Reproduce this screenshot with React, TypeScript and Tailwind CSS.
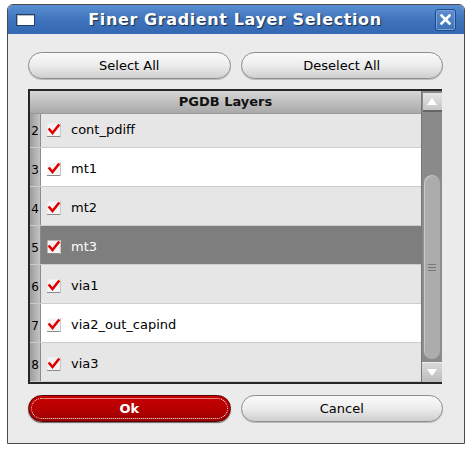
import React from "react";

const rows = [
  { n: 2, name: "cont_pdiff", bg: "bg-[#e6e6e6]" },
  { n: 3, name: "mt1", bg: "bg-white" },
  { n: 4, name: "mt2", bg: "bg-[#e6e6e6]" },
  { n: 5, name: "mt3", bg: "bg-[#7e7e7e]", sel: true },
  { n: 6, name: "via1", bg: "bg-[#e6e6e6]" },
  { n: 7, name: "via2_out_capind", bg: "bg-white" },
  { n: 8, name: "via3", bg: "bg-[#e6e6e6]" },
];

function Check() {
  return (
    <svg width="14" height="14" viewBox="0 0 14 14" className="shrink-0">
      <rect x="0.5" y="0.5" width="13" height="13" fill="#f4f4f4" />
      <line x1="0" y1="13.5" x2="14" y2="13.5" stroke="#8a8a8a" />
      <line x1="13.5" y1="0" x2="13.5" y2="14" stroke="#c8c8c8" />
      <path d="M2.5 6.5 L5.5 10 L11.5 2.5" fill="none" stroke="#e00000" strokeWidth="2.6" strokeLinecap="square" strokeLinejoin="miter" />
    </svg>
  );
}

export default function App() {
  const font = { fontFamily: '"DejaVu Sans", Verdana, sans-serif' };
  return (
    <div className="w-[473px] h-[450px] bg-white relative" style={font}>
      <div className="absolute left-[7px] top-[4px] w-[458px] h-[440px] flex flex-col rounded-t-[6px] border border-[#4a4a4a] overflow-hidden">
        {/* Title bar */}
        <div className="h-[29px] shrink-0 bg-gradient-to-b from-[#5b8fd3] via-[#3f74bd] to-[#3468b2] flex items-center px-[8px] relative">
          <div className="w-[19px] h-[12px] bg-white border border-[#1f3f70] shadow-[inset_1px_1px_0_#bbb]" />
          <div className="flex-1 text-center text-white font-bold text-[16px] tracking-[0.6px] [text-shadow:1px_1px_1px_#1a2d4d]">
            Finer Gradient Layer Selection
          </div>
          <div className="w-[21px] h-[22px] rounded-[3px] border border-[#1f4a85] bg-gradient-to-b from-[#5d8fd0] to-[#3c6fb5] flex items-center justify-center shadow-[inset_0_0_0_1px_#7aa3da]">
            <svg width="11" height="11" viewBox="0 0 11 11">
              <path d="M1.5 1.5 L9.5 9.5 M9.5 1.5 L1.5 9.5" stroke="white" strokeWidth="2.6" strokeLinecap="square" />
            </svg>
          </div>
        </div>
        {/* Body */}
        <div className="flex-1 bg-[#ebebeb] pt-[18px] pl-[20px] pr-[21px] flex flex-col">
          <div className="grid grid-cols-2 gap-[10px]">
            <button className="h-[27px] rounded-full border border-[#8c8c8c] bg-gradient-to-b from-[#fafafa] via-[#ececec] to-[#cfcfcf] text-[13px] text-black shadow-[0_1px_0_#bdbdbd]">
              Select All
            </button>
            <button className="h-[27px] rounded-full border border-[#8c8c8c] bg-gradient-to-b from-[#fafafa] via-[#ececec] to-[#cfcfcf] text-[13px] text-black shadow-[0_1px_0_#bdbdbd]">
              Deselect All
            </button>
          </div>
          {/* List */}
          <div className="mt-[10px] h-[295px] border-t-2 border-l-2 border-b-2 border-[#262626] flex mr-[1px]">
            <div className="flex-1 flex flex-col overflow-hidden">
              <div className="h-[23px] shrink-0 bg-gradient-to-b from-[#d6d6d6] to-[#a9a9a9] border-b border-[#9a9a9a] flex items-center justify-center font-bold text-[13px] text-[#111]">
                PGDB Layers
              </div>
              <div className="flex-1 overflow-hidden">
                <div className="-mt-[5px]">
                  {rows.map((r) => (
                    <div key={r.n} className={`h-[39px] flex ${r.bg} border-b border-[#cdcdcd]`}>
                      <div className="w-[11px] shrink-0 bg-gradient-to-r from-[#9c9c9c] to-[#c4c4c4] border-r border-[#8a8a8a] flex items-center justify-center text-[12px] text-black">
                        <span className="mt-[5px]">{r.n}</span>
                      </div>
                      <div className="flex items-center pl-[6px] gap-[10px] pt-[4px]">
                        <Check />
                        <span className={`text-[13px] ${r.sel ? "text-white" : "text-black"}`}>{r.name}</span>
                      </div>
                    </div>
                  ))}
                </div>
              </div>
            </div>
            {/* Scrollbar */}
            <div className="w-[21px] shrink-0 bg-[#8a8a8a] flex flex-col items-center pt-[2px] pb-[0px] border-l border-[#777]">
              <div className="w-[19px] h-[19px] bg-gradient-to-b from-[#e4e4e4] to-[#c6c6c6] border-b-2 border-[#666] flex items-center justify-center">
                <svg width="10" height="7" viewBox="0 0 10 7"><path d="M5 0 L10 7 L0 7 Z" fill="white" /></svg>
              </div>
              <div className="h-[62px]" />
              <div className="w-[18px] h-[186px] rounded-full bg-[#acacac] border border-[#8f8f8f] shadow-[inset_1px_1px_0_#c8c8c8] flex items-center justify-center">
                <div className="flex flex-col gap-[2px] w-[8px]">
                  <div className="h-[1px] bg-[#777]" />
                  <div className="h-[1px] bg-[#777]" />
                  <div className="h-[1px] bg-[#777]" />
                </div>
              </div>
              <div className="flex-1" />
              <div className="w-[20px] h-[20px] bg-gradient-to-b from-[#d9d9d9] to-[#bcbcbc] border-t border-[#eee] flex items-center justify-center">
                <svg width="10" height="7" viewBox="0 0 10 7"><path d="M0 0 L10 0 L5 7 Z" fill="white" /></svg>
              </div>
            </div>
          </div>
          {/* Bottom buttons */}
          <div className="grid grid-cols-2 gap-[10px] mt-[11px]">
            <button className="h-[27px] rounded-full border border-[#5a0000] bg-gradient-to-b from-[#c80000] via-[#b60000] to-[#9c0000] text-[13px] text-white font-bold p-[2px] shadow-[0_1px_1px_#666]">
              <div className="h-full w-full rounded-full border border-dotted border-white flex items-center justify-center">
                Ok
              </div>
            </button>
            <button className="h-[27px] rounded-full border border-[#8c8c8c] bg-gradient-to-b from-[#fafafa] via-[#ececec] to-[#cfcfcf] text-[13px] text-black shadow-[0_1px_0_#bdbdbd]">
              Cancel
            </button>
          </div>
        </div>
      </div>
    </div>
  );
}
